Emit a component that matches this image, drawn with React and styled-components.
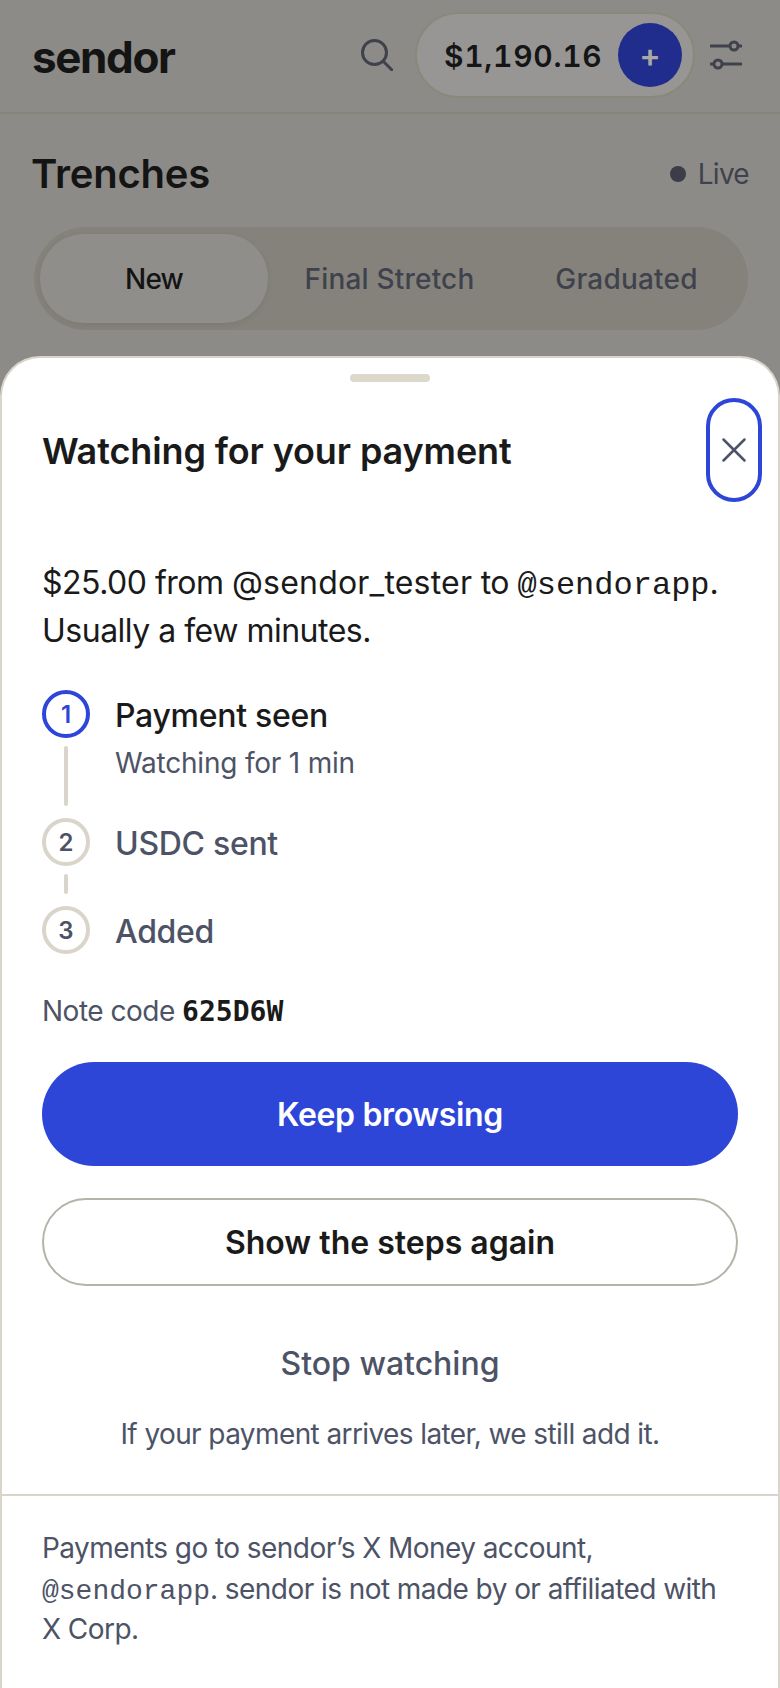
import React from "react";
import styled, { createGlobalStyle } from "styled-components";

const GlobalStyle = createGlobalStyle`
	html, body {
		margin: 0;
		padding: 0;
		background: #8c8b87;
	}
	* {
		box-sizing: border-box;
	}
`;

const sans = `Inter, "Noto Sans", sans-serif`;
const mono = `"Liberation Mono", monospace`;

const Page = styled.div`
	width: 780px;
	height: 1688px;
	display: flex;
	flex-direction: column;
	overflow: hidden;
	background: #8c8b87;
	font-family: ${sans};
`;

const TopBar = styled.header`
	height: 114px;
	flex: none;
	display: flex;
	align-items: center;
	justify-content: space-between;
	padding: 0 38px 2px 32px;
	border-bottom: 2px solid #85847a;
`;

const Logo = styled.div`
	margin-top: 3px;
	font-size: 44px;
	font-weight: 700;
	letter-spacing: -1.4px;
	color: #141414;
`;

const TopActions = styled.div`
	display: flex;
	align-items: center;
`;

const IconSlot = styled.span`
	display: flex;
	width: 32px;
	height: 32px;
	margin: ${props => props.$margin};
	color: #3f424c;
`;

const BalancePill = styled.div`
	width: 280px;
	height: 86px;
	display: flex;
	align-items: center;
	justify-content: space-between;
	padding: 0 11px 0 27px;
	border: 2px solid #8a887a;
	border-radius: 43px;
	background: #979694;
`;

const Balance = styled.span`
	margin-top: 2px;
	font-size: 30px;
	font-weight: 600;
	letter-spacing: 0.7px;
	font-variant-numeric: tabular-nums;
	color: #151515;
`;

const AddButton = styled.span`
	width: 64px;
	height: 64px;
	display: flex;
	align-items: center;
	justify-content: center;
	border-radius: 50%;
	background: #202d8c;
	color: #a9a8a4;
	font-size: 32px;
	font-weight: 600;
`;

const TitleRow = styled.div`
	flex: none;
	display: flex;
	align-items: center;
	justify-content: space-between;
	height: 50px;
	margin: 35px 31px 0 31px;
`;

const PageTitle = styled.h1`
	margin: 0 0 2px;
	font-size: 40px;
	font-weight: 600;
	letter-spacing: -0.2px;
	color: #141414;
`;

const LiveStatus = styled.div`
	display: flex;
	align-items: center;
	gap: 12px;
	font-size: 28px;
	letter-spacing: -0.7px;
	color: #3f424c;
`;

const LiveDot = styled.span`
	width: 16px;
	height: 16px;
	border-radius: 50%;
	background: #3b3d48;
`;

const Tabs = styled.div`
	flex: none;
	display: grid;
	grid-template-columns: 228px 243px 1fr;
	align-items: center;
	height: 103px;
	margin: 28px 32px 0 34px;
	padding: 6px;
	border-radius: 52px;
	background: #85827c;
`;

const Tab = styled.div`
	height: 89px;
	display: flex;
	align-items: center;
	justify-content: center;
	border-radius: 44px;
	font-size: 28px;
	font-weight: 500;
	letter-spacing: ${props => (props.$active ? "-0.8px" : "0.2px")};
	color: ${props => (props.$active ? "#141414" : "#3f424c")};
	background: ${props => (props.$active ? "#8f8e8b" : "transparent")};
	box-shadow: ${props => (props.$active ? "0 2px 6px rgba(0, 0, 0, 0.06)" : "none")};
`;

const Sheet = styled.section`
	flex: 1;
	margin-top: 26px;
	display: flex;
	flex-direction: column;
	background: #fff;
	border: 2px solid #d9d5ca;
	border-bottom: 0;
	border-radius: 40px 40px 0 0;
`;

const Handle = styled.div`
	flex: none;
	align-self: center;
	width: 80px;
	height: 8px;
	margin-top: 16px;
	border-radius: 4px;
	background: #dcd8cc;
`;

const SheetBody = styled.div`
	display: flex;
	flex-direction: column;
	padding: 0 40px;
`;

const SheetHeader = styled.div`
	display: flex;
	align-items: center;
	justify-content: space-between;
	margin: 16px -24px 0 0;
`;

const SheetTitle = styled.h2`
	margin: 2px 0 0;
	font-size: 36px;
	font-weight: 600;
	letter-spacing: -0.12px;
	color: #1a1a1a;
`;

const CloseButton = styled.button`
	width: 56px;
	height: 104px;
	display: flex;
	align-items: center;
	justify-content: center;
	padding: 0;
	background: none;
	border: 4px solid #2d46d8;
	border-radius: 28px;
	color: #4d5366;
`;

const Intro = styled.p`
	margin: 57px 0 0;
	font-size: 32px;
	line-height: 48px;
	letter-spacing: -0.5px;
	color: #1a1a1a;
`;

const SenderName = styled.span`
	letter-spacing: 0.2px;
`;

const MonoHandle = styled.span`
	font-family: ${mono};
	line-height: 1;
	letter-spacing: 0;
`;

const Steps = styled.div`
	display: flex;
	flex-direction: column;
	margin-top: 35px;
`;

const Step = styled.div`
	display: flex;
	gap: 25px;
`;

const StepMarker = styled.div`
	width: 48px;
	display: flex;
	flex-direction: column;
	align-items: center;
`;

const StepCircle = styled.span`
	width: 48px;
	height: 48px;
	flex: none;
	display: flex;
	align-items: center;
	justify-content: center;
	border-radius: 50%;
	border: 4px solid ${props => (props.$active ? "#2d46d8" : "#d9d5ca")};
	color: ${props => (props.$active ? "#2d46d8" : "#4d5366")};
	font-size: 24px;
	font-weight: 600;
`;

const StepLine = styled.span`
	width: 4px;
	height: ${props => props.$length}px;
	margin: 8px 0 12px;
	border-radius: 2px;
	background: #d9d5ca;
`;

const StepLabel = styled.div`
	margin-top: 2px;
	font-size: 32px;
	line-height: 48px;
	font-weight: 500;
	letter-spacing: -0.3px;
	color: ${props => (props.$active ? "#1a1a1a" : "#4d5366")};
`;

const StepHint = styled.div`
	margin-top: 3px;
	font-size: 28px;
	line-height: 40px;
	letter-spacing: -0.2px;
	color: #4d5366;
`;

const NoteLine = styled.div`
	margin-top: 35px;
	font-size: 28px;
	line-height: 40px;
	letter-spacing: -0.5px;
	color: #4d5366;
`;

const NoteCode = styled.span`
	font-family: "DejaVu Sans Mono", monospace;
	font-weight: 700;
	line-height: 1;
	letter-spacing: 0;
	color: #1a1a1a;
`;

const PrimaryButton = styled.button`
	height: 104px;
	margin-top: 31px;
	border: 0;
	border-radius: 52px;
	background: #2d46d8;
	color: #fff;
	font-family: ${sans};
	font-size: 32px;
	font-weight: 600;
	letter-spacing: -0.35px;
`;

const SecondaryButton = styled.button`
	height: 88px;
	margin-top: 32px;
	border: 2px solid #b5b2a8;
	border-radius: 44px;
	background: #fff;
	color: #1a1a1a;
	font-family: ${sans};
	font-size: 32px;
	font-weight: 600;
`;

const TextButton = styled.button`
	height: 48px;
	margin-top: 53px;
	padding: 0;
	border: 0;
	background: none;
	color: #4d5366;
	font-family: ${sans};
	font-size: 32px;
	font-weight: 500;
`;

const LaterNote = styled.p`
	margin: 27px 0 40px;
	font-size: 28px;
	line-height: 40px;
	letter-spacing: -0.6px;
	text-align: center;
	color: #4d5366;
`;

const Disclosure = styled.footer`
	padding: 32px 40px 0;
	border-top: 2px solid #d9d5ca;
	font-size: 28px;
	line-height: 40.5px;
	letter-spacing: -0.56px;
	white-space: nowrap;
	color: #4d5366;
`;

const SearchIcon = () => (
	<svg width="32" height="32" viewBox="0 0 32 32" fill="none" stroke="currentColor" strokeWidth="3" strokeLinecap="round">
		<circle cx="13.5" cy="13.5" r="12" />
		<line x1="22.5" y1="22.5" x2="31" y2="31" />
	</svg>
);

const SlidersIcon = () => (
	<svg width="32" height="32" viewBox="0 0 32 32" fill="none" stroke="currentColor" strokeWidth="3" strokeLinecap="round">
		<line x1="1" y1="7" x2="19" y2="7" />
		<circle cx="24" cy="7" r="4" />
		<line x1="29" y1="7" x2="31" y2="7" />
		<line x1="1" y1="25" x2="3" y2="25" />
		<circle cx="8" cy="25" r="4" />
		<line x1="13" y1="25" x2="31" y2="25" />
	</svg>
);

const CloseIcon = () => (
	<svg width="24" height="24" viewBox="0 0 24 24" fill="none" stroke="currentColor" strokeWidth="2.5" strokeLinecap="round">
		<line x1="1.5" y1="1.5" x2="22.5" y2="22.5" />
		<line x1="22.5" y1="1.5" x2="1.5" y2="22.5" />
	</svg>
);

const App = () => (
	<Page>
		<GlobalStyle />
		<TopBar>
			<Logo>sendor</Logo>
			<TopActions>
				<IconSlot $margin="0 22px 0 0">
					<SearchIcon />
				</IconSlot>
				<BalancePill>
					<Balance>$1,190.16</Balance>
					<AddButton>+</AddButton>
				</BalancePill>
				<IconSlot $margin="0 0 0 15px">
					<SlidersIcon />
				</IconSlot>
			</TopActions>
		</TopBar>
		<TitleRow>
			<PageTitle>Trenches</PageTitle>
			<LiveStatus>
				<LiveDot />
				Live
			</LiveStatus>
		</TitleRow>
		<Tabs>
			<Tab $active>New</Tab>
			<Tab>Final Stretch</Tab>
			<Tab>Graduated</Tab>
		</Tabs>
		<Sheet>
			<Handle />
			<SheetBody>
				<SheetHeader>
					<SheetTitle>Watching for your payment</SheetTitle>
					<CloseButton aria-label="Close">
						<CloseIcon />
					</CloseButton>
				</SheetHeader>
				<Intro>
					$25.00 from <SenderName>@sendor_tester</SenderName> to <MonoHandle>@sendorapp</MonoHandle>.
					<br />
					Usually a few minutes.
				</Intro>
				<Steps>
					<Step>
						<StepMarker>
							<StepCircle $active>1</StepCircle>
							<StepLine $length={60} />
						</StepMarker>
						<div>
							<StepLabel $active>Payment seen</StepLabel>
							<StepHint>Watching for 1 min</StepHint>
						</div>
					</Step>
					<Step>
						<StepMarker>
							<StepCircle>2</StepCircle>
							<StepLine $length={20} />
						</StepMarker>
						<StepLabel>USDC sent</StepLabel>
					</Step>
					<Step>
						<StepMarker>
							<StepCircle>3</StepCircle>
						</StepMarker>
						<StepLabel>Added</StepLabel>
					</Step>
				</Steps>
				<NoteLine>
					Note code <NoteCode>625D6W</NoteCode>
				</NoteLine>
				<PrimaryButton>Keep browsing</PrimaryButton>
				<SecondaryButton>Show the steps again</SecondaryButton>
				<TextButton>Stop watching</TextButton>
				<LaterNote>If your payment arrives later, we still add it.</LaterNote>
			</SheetBody>
			<Disclosure>
				Payments go to sendor’s X Money account,
				<br />
				<MonoHandle>@sendorapp</MonoHandle>. sendor is not made by or affiliated with
				<br />X Corp.
			</Disclosure>
		</Sheet>
	</Page>
);

export default App;
